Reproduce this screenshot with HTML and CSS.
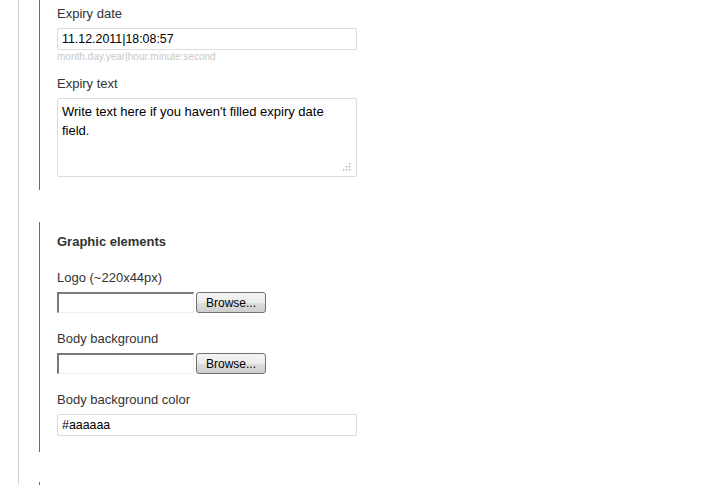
FILE: index.html
```html
<!DOCTYPE html>
<html>
<head>
<meta charset="utf-8">
<link rel="stylesheet" href="styles.css">
</head>
<body>
<div class="page">
  <div class="section first">
    <div class="label">Expiry date</div>
    <div class="field">11.12.2011|18:08:57</div>
    <div class="hint">month.day.year|hour:minute:second</div>
    <div class="label">Expiry text</div>
    <div class="area">Write text here if you haven't filled expiry date field.<svg class="grip" width="8" height="8" viewBox="0 0 8 8"><rect x="6" y="0" width="1.4" height="1.4"/><rect x="3" y="3" width="1.4" height="1.4"/><rect x="6" y="3" width="1.4" height="1.4"/><rect x="0" y="6" width="1.4" height="1.4"/><rect x="3" y="6" width="1.4" height="1.4"/><rect x="6" y="6" width="1.4" height="1.4"/></svg></div>
  </div>
  <div class="section">
    <div class="heading">Graphic elements</div>
    <div class="label">Logo (~220x44px)</div>
    <div class="file"><span class="filebox"></span><span class="browse">Browse...</span></div>
    <div class="label gap">Body background</div>
    <div class="file"><span class="filebox"></span><span class="browse">Browse...</span></div>
    <div class="label gap">Body background color</div>
    <div class="field">#aaaaaa</div>
  </div>
  <div class="section last"></div>
</div>
</body>
</html>
```
FILE: styles.css
```css
html, body {
  margin: 0;
  padding: 0;
  background: #fff;
}
body {
  font-family: "Liberation Sans", Arial, sans-serif;
  font-size: 13px;
  color: #333;
  height: 485px;
  overflow: hidden;
}
.page {
  margin-left: 18px;
  border-left: 1px solid #d4d4d4;
  padding-left: 20px;
  min-height: 485px;
}
.section {
  border-left: 1px solid #3a7f8c;
  padding: 12px 0 16px 17px;
  margin-bottom: 30px;
}
.section.first {
  padding-top: 6px;
  padding-bottom: 13px;
  margin-bottom: 32px;
}
.section.last {
  height: 10px;
  padding: 0;
  margin: 0;
}
.label {
  line-height: 15px;
  height: 15px;
  margin-bottom: 7px;
  color: #333;
}
.label.gap {
  margin-top: 18px;
}
.heading {
  font-weight: bold;
  line-height: 15px;
  margin-bottom: 21px;
  color: #333;
}
.field {
  width: 290px;
  height: 20px;
  line-height: 20px;
  border: 1px solid #dcdcdc;
  border-radius: 2px;
  padding: 0 4px 0 4px;
  color: #000;
  font-size: 12.4px;
}
.hint {
  font-size: 10px;
  color: #c8c8c8;
  line-height: 10px;
  height: 10px;
  margin-top: 2px;
  margin-bottom: 14px;
}
.area {
  position: relative;
  width: 290px;
  height: 71px;
  border: 1px solid #dcdcdc;
  border-radius: 2px;
  padding: 3px 4px 3px 4px;
  color: #000;
  font-size: 13px;
  line-height: 19px;
}
.grip {
  position: absolute;
  right: 5px;
  bottom: 5px;
  fill: #b0b0b0;
}
.file {
  display: flex;
  align-items: stretch;
  height: 21px;
  margin-top: 1px;
}
.filebox {
  width: 134px;
  border-top: 2px solid #7a7a7a;
  border-left: 2px solid #7a7a7a;
  border-bottom: 1px solid #efefef;
  border-right: 1px solid #efefef;
  background: #fff;
}
.browse {
  margin-left: 2px;
  width: 68px;
  border: 1px solid #707070;
  border-radius: 3px;
  background: linear-gradient(#f4f4f4 0%, #ebebeb 50%, #dddddd 51%, #cfcfcf 100%);
  color: #000;
  font-size: 12px;
  display: flex;
  align-items: center;
  justify-content: center;
}
```
